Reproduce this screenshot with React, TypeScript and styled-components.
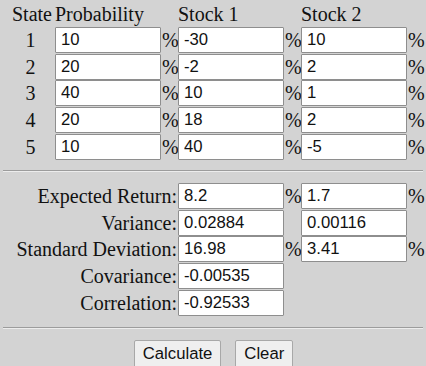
import { FC } from 'react';
import styled, { createGlobalStyle } from 'styled-components';

const GlobalStyle = createGlobalStyle`
  html, body {
    margin: 0;
    padding: 0;
    background: #d3d3d3;
  }
  body {
    font-family: "Liberation Serif", "Times New Roman", serif;
    font-size: 20px;
    color: #111;
  }
`;

// 行データ
const states = [
  { id: 1, prob: '10', s1: '-30', s2: '10' },
  { id: 2, prob: '20', s1: '-2', s2: '2' },
  { id: 3, prob: '40', s1: '10', s2: '1' },
  { id: 4, prob: '20', s1: '18', s2: '2' },
  { id: 5, prob: '10', s1: '40', s2: '-5' },
];

const results = [
  { label: 'Expected Return:', a: '8.2', b: '1.7', pct: true },
  { label: 'Variance:', a: '0.02884', b: '0.00116', pct: false },
  { label: 'Standard Deviation:', a: '16.98', b: '3.41', pct: true },
  { label: 'Covariance:', a: '-0.00535' },
  { label: 'Correlation:', a: '-0.92533' },
];

const App: FC = () => {
  return (
    <>
      <GlobalStyle />
      <Page>
        <Grid>
          <HeadCell $center>State</HeadCell>
          <HeadCell $span={2}>Probability</HeadCell>
          <HeadCell $span={2}>Stock 1</HeadCell>
          <HeadCell $span={2}>Stock 2</HeadCell>
          {states.map((s) => (
            <Row key={s.id}>
              <StateNum>{s.id}</StateNum>
              <Field defaultValue={s.prob} />
              <Pct>%</Pct>
              <Field defaultValue={s.s1} />
              <Pct>%</Pct>
              <Field defaultValue={s.s2} />
              <Pct>%</Pct>
            </Row>
          ))}
        </Grid>
        <Rule />
        <Grid $results>
          {results.map((r) => (
            <Row key={r.label}>
              <Label>{r.label}</Label>
              <Field defaultValue={r.a} />
              <Pct>{r.pct ? '%' : ''}</Pct>
              {r.b !== undefined ? <Field defaultValue={r.b} /> : <span />}
              <Pct>{r.pct ? '%' : ''}</Pct>
            </Row>
          ))}
        </Grid>
        <Rule $bottom />
        <Buttons>
          <Button>Calculate</Button>
          <Button>Clear</Button>
        </Buttons>
      </Page>
    </>
  );
};

export default App;

const Page = styled.div`
  width: 426px;
  height: 366px;
  overflow: hidden;
  padding-top: 3px;
  box-sizing: border-box;
`;

const Grid = styled.div<{ $results?: boolean }>`
  display: grid;
  grid-template-columns: ${(p) =>
    p.$results ? '168px 106px 17px 106px 17px' : '45px 106px 17px 106px 17px 106px 17px'};
  ${(p) => (p.$results ? 'margin-top: 11px;' : 'grid-template-rows: 23px;')}
  grid-auto-rows: 26px;
  row-gap: 0.75px;
  padding-left: 10px;
`;

const Row = styled.div`
  display: contents;
`;

const HeadCell = styled.div<{ $span?: number; $center?: boolean }>`
  grid-column: span ${(p) => p.$span ?? 1};
  text-align: ${(p) => (p.$center ? 'center' : 'left')};
  line-height: 23px;
  white-space: nowrap;
  margin-left: ${(p) => (p.$center ? '-1px' : '0')};
`;

const StateNum = styled.div`
  text-align: center;
  line-height: 26px;
  padding-right: 4px;
`;

const Label = styled.div`
  text-align: right;
  line-height: 26px;
  padding-right: 1px;
  white-space: nowrap;
`;

const Field = styled.input`
  box-sizing: border-box;
  width: 106px;
  height: 26px;
  margin: 0;
  padding: 0 5px;
  border: 1px solid #8e8e8e;
  border-radius: 1px;
  background: #fff;
  font-family: "Liberation Sans", Arial, sans-serif;
  font-size: 16.7px;
  color: #111;
  outline: none;
`;

const Pct = styled.div`
  line-height: 26px;
  padding-left: 1px;
`;

const Rule = styled.hr<{ $bottom?: boolean }>`
  margin: ${(p) => (p.$bottom ? '11px 3px 0' : '10px 3px 0')};
  height: 0;
  border: none;
  border-top: 1px solid #9c9c9c;
  border-bottom: 1px solid #ececec;
`;

const Buttons = styled.div`
  display: flex;
  justify-content: center;
  gap: 14px;
  margin-top: 11px;
  padding-left: 1px;
`;

const Button = styled.button`
  height: 28px;
  padding: 0 8px;
  background: #efefef;
  border: 1px solid #a8a8a8;
  border-radius: 2px;
  font-family: "Liberation Sans", Arial, sans-serif;
  font-size: 16.7px;
  color: #111;
`;
